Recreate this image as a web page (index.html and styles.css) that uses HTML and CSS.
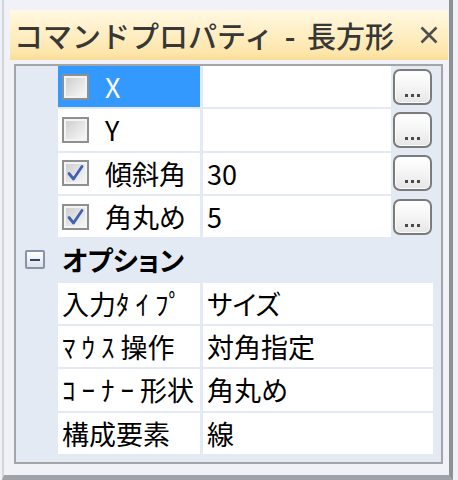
FILE: index.html
```html
<!DOCTYPE html>
<html lang="ja">
<head>
<meta charset="utf-8">
<title>コマンドプロパティ</title>
<link rel="stylesheet" href="styles.css">
</head>
<body>
<div class="frame">
  <div class="titlebar">
    <span class="title">コマンドプロパティ <span class="dash">-</span> 長方形</span>
    <svg class="close" width="18" height="18" viewBox="0 0 18 18"><path d="M1.5 1.5 L16.5 16.5 M16.5 1.5 L1.5 16.5" stroke="#4e4e4e" stroke-width="2.6" fill="none"/></svg>
  </div>
  <div class="grid">
    <div class="row">
      <div class="gutter"></div>
      <div class="label selected"><span class="cb"></span><span class="ltext">X</span></div>
      <div class="value"></div>
      <div class="btncol"><span class="btn"><i></i><i></i><i></i></span></div>
    </div>
    <div class="row">
      <div class="gutter"></div>
      <div class="label"><span class="cb"></span><span class="ltext">Y</span></div>
      <div class="value"></div>
      <div class="btncol"><span class="btn"><i></i><i></i><i></i></span></div>
    </div>
    <div class="row">
      <div class="gutter"></div>
      <div class="label"><span class="cb checked"><svg width="23" height="22" viewBox="0 0 23 22"><path d="M5 11.5 L9.5 17 L18 4.5" stroke="#4361b2" stroke-width="2.8" fill="none" stroke-linecap="round" stroke-linejoin="round"/></svg></span><span class="ltext">傾斜角</span></div>
      <div class="value">30</div>
      <div class="btncol"><span class="btn"><i></i><i></i><i></i></span></div>
    </div>
    <div class="row">
      <div class="gutter"></div>
      <div class="label"><span class="cb checked"><svg width="23" height="22" viewBox="0 0 23 22"><path d="M5 11.5 L9.5 17 L18 4.5" stroke="#4361b2" stroke-width="2.8" fill="none" stroke-linecap="round" stroke-linejoin="round"/></svg></span><span class="ltext">角丸め</span></div>
      <div class="value">5</div>
      <div class="btncol"><span class="btn"><i></i><i></i><i></i></span></div>
    </div>
    <div class="row cat">
      <div class="gutter"><span class="minus"><i></i></span></div>
      <div class="catlabel">オプション</div>
    </div>
    <div class="row">
      <div class="gutter"></div>
      <div class="label plain">入力<span class="hw">ﾀｲﾌﾟ</span></div>
      <div class="value">サイズ</div>
      <div class="endpad"></div>
    </div>
    <div class="row">
      <div class="gutter"></div>
      <div class="label plain"><span class="hw">ﾏｳｽ</span>操作</div>
      <div class="value">対角指定</div>
      <div class="endpad"></div>
    </div>
    <div class="row">
      <div class="gutter"></div>
      <div class="label plain"><span class="hw">ｺｰﾅｰ</span>形状</div>
      <div class="value">角丸め</div>
      <div class="endpad"></div>
    </div>
    <div class="row">
      <div class="gutter"></div>
      <div class="label plain">構成要素</div>
      <div class="value">線</div>
      <div class="endpad"></div>
    </div>
  </div>
</div>
</body>
</html>
```

FILE: styles.css
```css
html, body {
  margin: 0;
  padding: 0;
}
body {
  width: 458px;
  height: 480px;
  background: #eef1f6;
  overflow: hidden;
  font-family: "Noto Sans CJK JP", "Noto Sans", sans-serif;
}
.frame {
  box-sizing: border-box;
  margin-left: 2px;
  width: 451px;
  height: 480px;
  border-left: 2px solid #d3d7dd;
  border-right: 4px solid #8d9096;
  border-bottom: 5px solid #9fa3a9;
  background: #f0f2f7;
  padding: 10px 1px 0 6px;
}
.titlebar {
  height: 50px;
  box-sizing: border-box;
  display: flex;
  align-items: center;
  padding-left: 4px;
  background: linear-gradient(180deg, #fff8e2 0%, #fff0c9 40%, #fde6ab 85%, #f9dc98 100%);
}
.title {
  font-size: 29px;
  font-weight: 500;
  color: #373737;
  line-height: 1;
  white-space: nowrap;
  word-spacing: 5px;
}
.dash {
  font-weight: 700;
}
.close {
  margin-left: auto;
  margin-right: 10px;
}
.grid {
  box-sizing: border-box;
  margin: 4px 5px 0 4px;
  height: 400px;
  border: 2px solid #a3a5a8;
  background: #e4eaf3;
  font-size: 27px;
  color: #000;
}
.row {
  box-sizing: border-box;
  height: 43.33px;
  padding-bottom: 2px;
  display: flex;
  background: #e4eaf3;
}
.gutter {
  width: 42px;
  flex: none;
  display: flex;
  align-items: center;
}
.label {
  width: 142px;
  flex: none;
  background: #fff;
  display: flex;
  align-items: center;
  padding-left: 4px;
  box-sizing: border-box;
  line-height: 1;
  white-space: nowrap;
  margin-right: 3px;
}
.label.selected {
  background: #3399ff;
  color: #fff;
}
.label.plain {
  padding-left: 4px;
}
.hw {
  letter-spacing: 6px;
}
.ltext {
  margin-left: 16px;
}
.value {
  flex: 1;
  background: #fff;
  display: flex;
  align-items: center;
  padding-left: 4px;
  line-height: 1;
  white-space: nowrap;
  font-feature-settings: "palt";
}
.btncol {
  width: 50px;
  flex: none;
  display: flex;
  align-items: center;
  padding-left: 2px;
  box-sizing: border-box;
}
.endpad {
  width: 8px;
  flex: none;
}
.cb {
  box-sizing: border-box;
  width: 27px;
  height: 26px;
  flex: none;
  border: 2px solid #8e8f90;
  background: linear-gradient(135deg, #c9cacb 0%, #e6e6e6 55%, #fafafa 100%);
  box-shadow: inset 0 0 0 2px #f3f3f3;
  display: flex;
  align-items: center;
  justify-content: center;
}
.cb svg {
  display: block;
}
.btn {
  box-sizing: border-box;
  width: 39px;
  height: 36px;
  border: 2px solid #7a7b7c;
  border-radius: 7px;
  background: linear-gradient(180deg, #ffffff 0%, #f6f6f6 45%, #e6e6e6 100%);
  box-shadow: inset 0 0 0 1px #fcfcfc;
  display: flex;
  justify-content: center;
  align-items: flex-end;
  gap: 3px;
  padding-bottom: 6px;
}
.btn i {
  display: block;
  width: 3px;
  height: 3px;
  background: #4a4a4a;
}
.cat .catlabel {
  padding-left: 4px;
  font-weight: 700;
  display: flex;
  align-items: center;
  line-height: 1;
  font-feature-settings: "palt";
}
.minus {
  box-sizing: border-box;
  margin-left: 9px;
  width: 20px;
  height: 19px;
  border: 2px solid #8793a6;
  border-radius: 2px;
  background: linear-gradient(180deg, #ffffff, #dde3ec);
  display: flex;
  align-items: center;
  justify-content: center;
}
.minus i {
  display: block;
  width: 10px;
  height: 2px;
  background: #34446a;
}
```
